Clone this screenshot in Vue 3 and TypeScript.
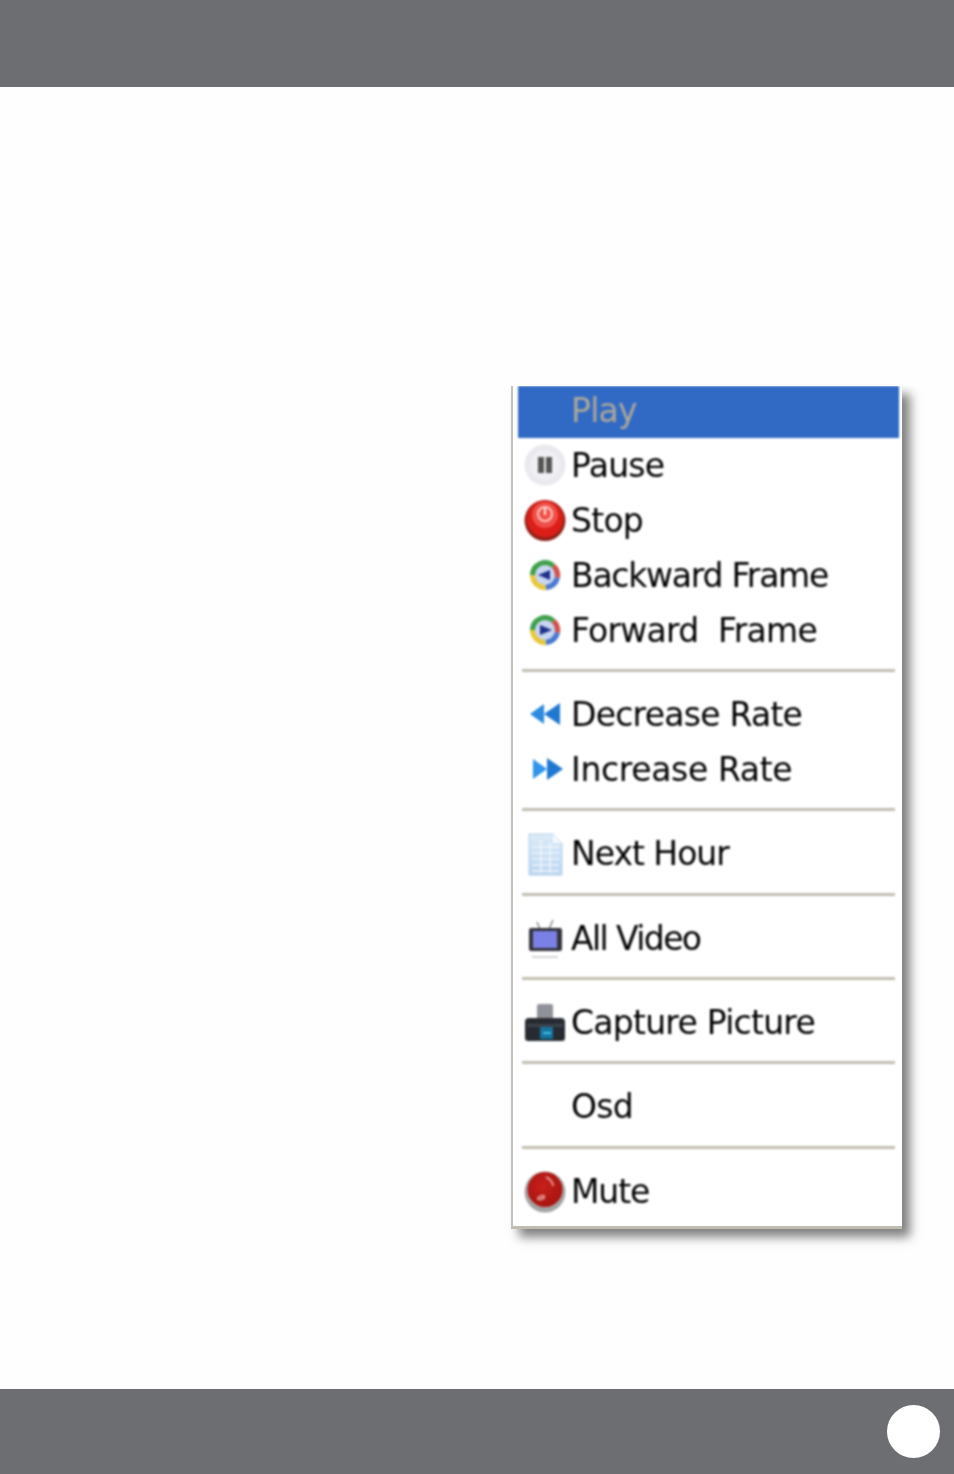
<template>
  <div class="page">
    <header class="bar top-bar"></header>
    <main class="content">
      <div class="menu">
        <template v-for="(group, g) in groups" :key="g">
          <div v-if="g > 0" class="sep"><span class="sep-line"></span></div>
          <div
            v-for="item in group"
            :key="item.label"
            class="row"
            :class="{ active: item.active }"
          >
            <span class="slot">
              <svg v-if="item.icon" class="icon" viewBox="0 0 44 44">
                <defs>
                  <radialGradient id="muteGlow" cx="45%" cy="40%" r="60%">
                    <stop offset="0" stop-color="#c8201c" />
                    <stop offset="1" stop-color="#a81410" />
                  </radialGradient>
                  <linearGradient id="sheetFill" x1="0" y1="0" x2="0" y2="1">
                    <stop offset="0" stop-color="#dcebf8" />
                    <stop offset="1" stop-color="#b9d6f0" />
                  </linearGradient>
                </defs>
                <!-- pause -->
                <g v-if="item.icon === 'pause'">
                  <circle cx="22" cy="22" r="20.5" fill="#e9e9ee" />
                  <circle cx="22" cy="22" r="15" fill="#f0f0f4" />
                  <rect x="15" y="14" width="6" height="16" fill="#555" />
                  <rect x="23" y="14" width="6" height="16" fill="#555" />
                </g>
                <!-- stop -->
                <g v-else-if="item.icon === 'stop'">
                  <circle cx="22" cy="22.5" r="20.5" fill="#8c2018" />
                  <circle cx="22" cy="21" r="18.5" fill="#dc1e18" />
                  <circle cx="22" cy="17" r="13" fill="#ee5048" />
                  <circle cx="22" cy="16" r="7" fill="none" stroke="#ffc8c2" stroke-width="2" />
                  <rect x="21" y="10" width="2" height="7" fill="#ffe8e4" />
                </g>
                <!-- backward / forward frame -->
                <g v-else-if="item.icon === 'backward' || item.icon === 'forward'">
                  <path d="M7 22a15 15 0 0 1 25-11l-5 6a8 8 0 0 0-13 5z" fill="#3fa04a" />
                  <path d="M32 11a15 15 0 0 1 5 14l-7-1a8 8 0 0 0-3-7z" fill="#d4504a" />
                  <path d="M37 25a15 15 0 0 1-14 12l-1-7a8 8 0 0 0 8-6z" fill="#4a78d0" />
                  <path d="M23 37a15 15 0 0 1-16-15h7a8 8 0 0 0 8 8z" fill="#e8c83a" />
                  <circle cx="22" cy="22" r="10" fill="#c8d6f2" />
                  <path v-if="item.icon === 'backward'" d="M15 22l12-5v10z" fill="#20308c" />
                  <path v-else d="M29 22l-12-5v10z" fill="#20308c" />
                </g>
                <!-- decrease -->
                <g v-else-if="item.icon === 'decrease'">
                  <path d="M7 22l14-10v20z" fill="#2a8be0" />
                  <path d="M21 22l16-11v22z" fill="#1f78d0" />
                </g>
                <!-- increase -->
                <g v-else-if="item.icon === 'increase'">
                  <path d="M10 12l14 10-14 10z" fill="#2f95ea" />
                  <path d="M24 11l16 11-16 11z" fill="#1f78d0" />
                </g>
                <!-- next hour: sheet -->
                <g v-else-if="item.icon === 'sheet'">
                  <path d="M6 2h24l9 9v32H6z" fill="url(#sheetFill)" stroke="#b4cfe8" stroke-width="1" />
                  <path d="M30 2v9h9z" fill="#f4f8fc" />
                  <path d="M9 15h27M9 21h27M9 27h27M9 33h27M9 39h27M18 8v33M27 11v30" stroke="#eef5fb" stroke-width="1.5" fill="none" />
                </g>
                <!-- all video: tv -->
                <g v-else-if="item.icon === 'tv'">
                  <path d="M17 13l-3-7M26 13l4-9" stroke="#888" stroke-width="1.5" fill="none" />
                  <rect x="6" y="12" width="33" height="23" rx="2" fill="#33343c" />
                  <rect x="10" y="15" width="24" height="17" fill="#7b80e4" />
                  <rect x="9" y="40" width="26" height="2" fill="#d5d5d5" />
                </g>
                <!-- capture: camera -->
                <g v-else-if="item.icon === 'camera'">
                  <rect x="14" y="3" width="16" height="16" rx="2" fill="#8f9298" />
                  <path d="M6 17h32a4 4 0 0 1 4 4v16a3 3 0 0 1-3 3H5a3 3 0 0 1-3-3V21a4 4 0 0 1 4-4z" fill="#262b31" />
                  <rect x="4" y="23" width="36" height="3" fill="#3d434b" />
                  <rect x="17" y="26" width="13" height="12" rx="1" fill="#17729e" />
                  <rect x="20" y="31" width="8" height="2" fill="#44c4ec" />
                </g>
                <!-- mute -->
                <g v-else-if="item.icon === 'mute'">
                  <circle cx="22" cy="23" r="20.5" fill="#a4a4a4" />
                  <circle cx="22" cy="20.5" r="17.5" fill="url(#muteGlow)" />
                  <path d="M23 8c4 2 7 5 7 9M21 29c-2 1-5 2-6 1s3-4 6-3z" stroke="#e2948a" stroke-width="2" fill="none" />
                </g>
              </svg>
            </span>
            <span class="label" :style="item.track ? { letterSpacing: item.track + 'px' } : undefined">{{ item.label }}</span>
          </div>
        </template>
      </div>
    </main>
    <footer class="bar bottom-bar">
      <span class="page-dot"></span>
    </footer>
  </div>
</template>

<script setup lang="ts">
interface MenuItem {
  label: string;
  icon?: string;
  active?: boolean;
  track?: number;
}

const groups: MenuItem[][] = [
  [
    { label: 'Play', active: true },
    { label: 'Pause', icon: 'pause' },
    { label: 'Stop', icon: 'stop' },
    { label: 'Backward Frame', icon: 'backward', track: -1.25 },
    { label: 'Forward  Frame', icon: 'forward' },
  ],
  [
    { label: 'Decrease Rate', icon: 'decrease' },
    { label: 'Increase Rate', icon: 'increase', track: -0.35 },
  ],
  [{ label: 'Next Hour', icon: 'sheet', track: -1 }],
  [{ label: 'All Video', icon: 'tv', track: -1.6 }],
  [{ label: 'Capture Picture', icon: 'camera' }],
  [{ label: 'Osd' }],
  [{ label: 'Mute', icon: 'mute', track: -1.1 }],
];
</script>

<style scoped>
.page {
  display: flex;
  flex-direction: column;
  height: 1474px;
  background: #fefefe;
  font-family: "DejaVu Sans", sans-serif;
}

.bar {
  background: #6d6e71;
  flex: none;
}

.top-bar {
  height: 87px;
}

.bottom-bar {
  height: 85px;
  display: flex;
  justify-content: flex-end;
  align-items: center;
  padding-right: 14px;
}

.page-dot {
  width: 53px;
  height: 53px;
  border-radius: 50%;
  background: #fff;
}

.content {
  flex: 1;
  padding: 299px 0 0 511px;
}

.menu {
  width: 391px;
  box-sizing: border-box;
  height: 843px;
  background: #fff;
  border-left: 2px solid #c4c1b6;
  border-bottom: 3px solid #c0bdb0;
  padding: 0 3px 0 5px;
  box-shadow: 8px 8px 10px rgba(0, 0, 0, 0.5);
  clip-path: inset(0 -30px -30px -30px);
}

.row {
  display: flex;
  align-items: center;
  height: 55px;
  filter: blur(0.8px);
}

.row.active {
  height: 52px;
  background: #316ac5;
  margin-bottom: -0.5px;
  padding-bottom: 4px;
  box-sizing: border-box;
}

.slot {
  width: 54px;
  flex: none;
  display: flex;
  justify-content: center;
}

.icon {
  width: 44px;
  height: 44px;
  display: block;
}

.label {
  font-size: 33px;
  letter-spacing: -0.75px;
  color: #000;
  white-space: pre;
  margin-left: -1px;
}

.active .label {
  color: #aca899;
}

.sep {
  height: 29.4px;
  padding: 11.4px 4px 0;
  box-sizing: border-box;
  filter: blur(0.8px);
}

.sep-line {
  display: block;
  height: 3px;
  background: #c0bdb0;
}
</style>
